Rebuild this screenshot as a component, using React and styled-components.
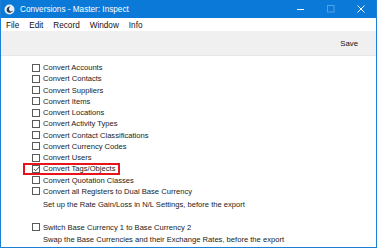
import React from "react";
import styled, { createGlobalStyle } from "styled-components";

const Global = createGlobalStyle`
  html, body { margin: 0; padding: 0; background: #ffffff; }
  body { font-family: "Liberation Sans", Arial, sans-serif; }
`;

const Window = styled.div`
  width: 377px;
  height: 248px;
  box-sizing: border-box;
  border: 1px solid #1a7fd6;
  border-top: none;
  display: flex;
  flex-direction: column;
  background: #fff;
  overflow: hidden;
`;

const TitleBar = styled.div`
  height: 18px;
  flex: none;
  background: #0a79d8;
  display: flex;
  align-items: center;
  padding-left: 3px;
  color: #fff;
  font-size: 8.2px;
`;

const TitleText = styled.span`
  margin-left: 5px;
  flex: 1;
`;

const Controls = styled.div`
  display: flex;
  align-items: center;
  height: 100%;
`;

const Ctrl = styled.div`
  width: 30px;
  height: 100%;
  display: flex;
  align-items: center;
  justify-content: center;
  opacity: ${(p) => (p.$dim ? 0.3 : 1)};
`;

const MenuBar = styled.div`
  height: 12px;
  flex: none;
  display: flex;
  align-items: center;
  padding-left: 5px;
  gap: 10px;
  font-size: 8.2px;
  color: #111;
  padding-top: 1px;
`;

const MenuItem = styled.span``;

const Toolbar = styled.div`
  height: 24px;
  flex: none;
  background: #f0f0f0;
  border-bottom: 1px solid #e6e6e6;
  display: flex;
  align-items: center;
  justify-content: flex-end;
  padding-right: 18px;
  font-size: 7.8px;
  color: #111;
`;

const Content = styled.div`
  flex: 1;
  padding: 6px 0 0 31px;
  font-size: 7.6px;
  color: #1b1b1b;
  display: flex;
  flex-direction: column;
`;

const Row = styled.div`
  position: relative;
  height: 11.25px;
  display: flex;
  align-items: center;
  gap: 3px;
  margin-top: ${(p) => p.$mt || 0}px;
`;

const Note = styled.div`
  height: 12px;
  display: flex;
  align-items: center;
  padding-left: 11px;
  margin-top: ${(p) => p.$mt || 0}px;
`;

const Box = styled.span`
  width: 8px;
  height: 8px;
  box-sizing: border-box;
  border: 1px solid #5a5a5a;
  background: #fff;
  flex: none;
  position: relative;
  display: flex;
  align-items: center;
  justify-content: center;
`;

const Highlight = styled.span`
  position: absolute;
  left: -9px;
  top: -0.5px;
  width: 97px;
  height: 12.5px;
  box-sizing: border-box;
  border: 2px solid #e8141c;
  pointer-events: none;
`;

const items = [
  "Convert Accounts",
  "Convert Contacts",
  "Convert Suppliers",
  "Convert Items",
  "Convert Locations",
  "Convert Activity Types",
  "Convert Contact Classifications",
  "Convert Currency Codes",
  "Convert Users",
  "Convert Tags/Objects",
  "Convert Quotation Classes",
  "Convert all Registers to Dual Base Currency",
];

function Check({ checked }) {
  return (
    <Box>
      {checked && (
        <svg width="7" height="6" viewBox="0 0 7 6" style={{ position: "absolute", left: 0, top: 0.5 }}>
          <path d="M0.8 3 L2.6 4.8 L6.3 0.8" fill="none" stroke="#333" strokeWidth="0.9" />
        </svg>
      )}
    </Box>
  );
}

export default function App() {
  return (
    <>
      <Global />
      <Window>
        <TitleBar>
          <svg width="11" height="11" viewBox="0 0 11 11">
            <circle cx="5.5" cy="5.5" r="5" fill="#e9eef5" />
            <path d="M3 7.5 C2 5 3.5 2.2 6.5 2.5 C5 3.5 4.5 5 5.5 6.5 C6.5 8 8.5 7.5 9 6 C8.8 8.8 5 9.8 3 7.5 Z" fill="#24384f" />
          </svg>
          <TitleText>Conversions - Master: Inspect</TitleText>
          <Controls>
            <Ctrl>
              <svg width="8" height="8" viewBox="0 0 8 8">
                <line x1="0" y1="4.5" x2="7" y2="4.5" stroke="#fff" strokeWidth="1" />
              </svg>
            </Ctrl>
            <Ctrl $dim>
              <svg width="8" height="8" viewBox="0 0 8 8">
                <rect x="0.5" y="0.5" width="6.5" height="6.5" fill="none" stroke="#fff" strokeWidth="1" />
              </svg>
            </Ctrl>
            <Ctrl>
              <svg width="8" height="8" viewBox="0 0 8 8">
                <path d="M0.5 0.5 L7.5 7.5 M7.5 0.5 L0.5 7.5" stroke="#fff" strokeWidth="1" />
              </svg>
            </Ctrl>
          </Controls>
        </TitleBar>
        <MenuBar>
          <MenuItem>File</MenuItem>
          <MenuItem>Edit</MenuItem>
          <MenuItem>Record</MenuItem>
          <MenuItem>Window</MenuItem>
          <MenuItem>Info</MenuItem>
        </MenuBar>
        <Toolbar>Save</Toolbar>
        <Content>
          {items.map((t, i) => (
            <Row key={t}>
              <Check checked={i === 9} />
              <span>{t}</span>
              {i === 9 && <Highlight />}
            </Row>
          ))}
          <Note $mt={1.5}>Set up the Rate Gain/Loss in N/L Settings, before the export</Note>
          <Row $mt={11}>
            <Check />
            <span>Switch Base Currency 1 to Base Currency 2</span>
          </Row>
          <Note $mt={1}>Swap the Base Currencies and their Exchange Rates, before the export</Note>
        </Content>
      </Window>
    </>
  );
}
